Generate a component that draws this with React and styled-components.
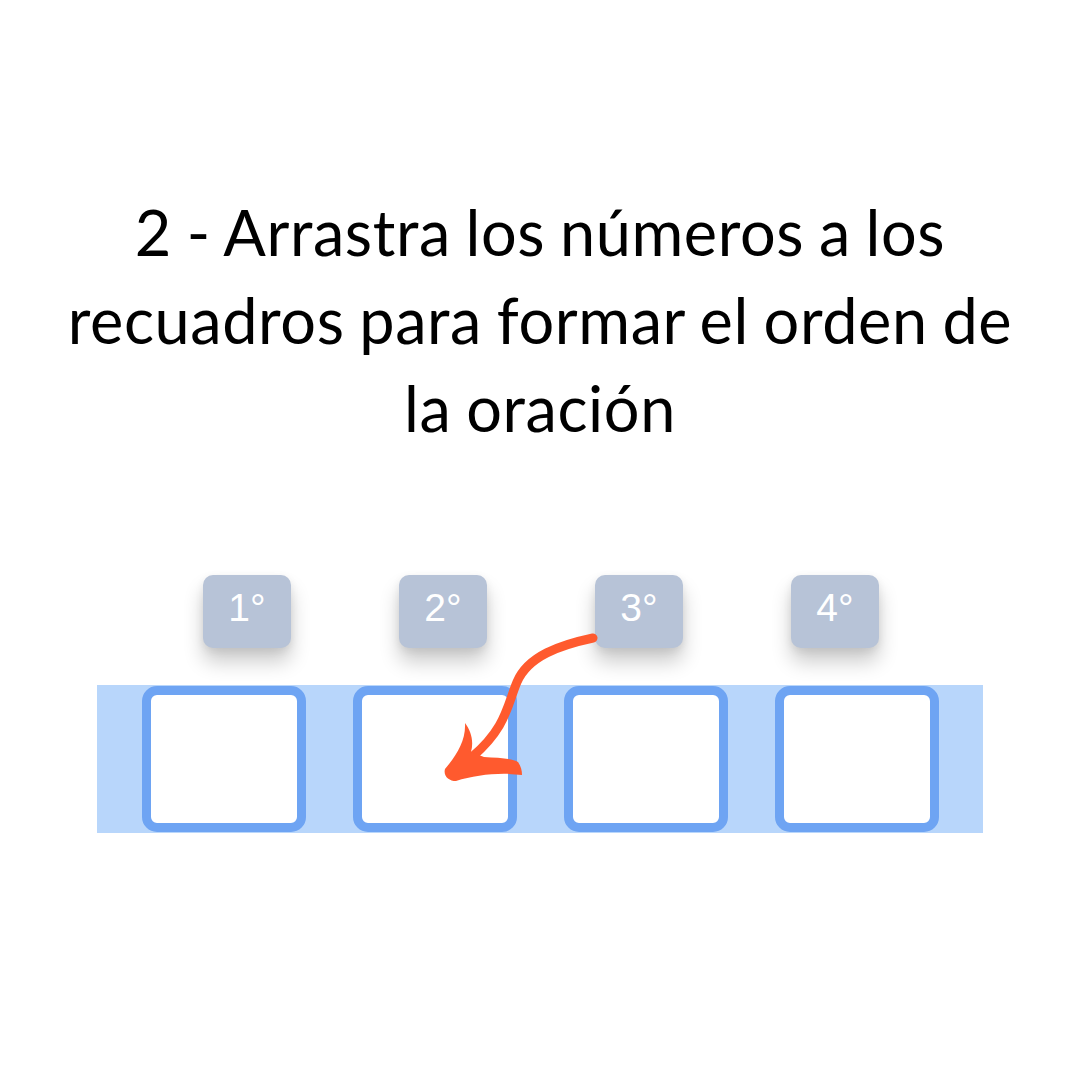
import React from "react";
import styled, { createGlobalStyle } from "styled-components";

const Global = createGlobalStyle`
  html, body { margin: 0; padding: 0; background: #ffffff; }
  #root { width: 1080px; height: 1080px; }
`;

const Page = styled.div`
  position: relative;
  width: 1080px;
  height: 1080px;
  background: #ffffff;
  display: flex;
  flex-direction: column;
  align-items: center;
  overflow: hidden;
`;

const Title = styled.h1`
  margin: 188px 0 0;
  font-family: "Lato", "Open Sans", sans-serif;
  font-weight: 400;
  font-size: 63px;
  line-height: 88px;
  letter-spacing: 0.6px;
  word-spacing: -2px;
  color: #000000;
  text-align: center;
  white-space: nowrap;
`;

const ChipRow = styled.div`
  margin-top: 123px;
  display: flex;
  gap: 108px;
  padding-left: 2px;
`;

const Chip = styled.div`
  width: 88px;
  height: 73px;
  box-sizing: border-box;
  padding-top: 13px;
  border-radius: 10px;
  background: #b7c3d7;
  box-shadow: 0 14px 20px rgba(0, 0, 0, 0.2), 0 3px 8px rgba(0, 0, 0, 0.08);
  color: #ffffff;
  font-family: "Liberation Sans", Arial, sans-serif;
  font-size: 39px;
  line-height: 40px;
  text-align: center;
`;

const Band = styled.div`
  margin-top: 37px;
  width: 886px;
  height: 148px;
  background: #b8d6fb;
  display: flex;
  align-items: center;
  justify-content: center;
  gap: 47px;
`;

const Slot = styled.div`
  width: 164px;
  height: 146px;
  box-sizing: border-box;
  border: 9px solid #6ea4f3;
  border-radius: 15px;
  background: #ffffff;
`;

const ArrowLayer = styled.svg`
  position: absolute;
  left: 0;
  top: 0;
  width: 1080px;
  height: 1080px;
  pointer-events: none;
`;

const orders = ["1°", "2°", "3°", "4°"];

export default function App() {
  return (
    <>
      <Global />
      <Page>
        <Title>
          2 - Arrastra los números a los
          <br />
          recuadros para formar el orden de
          <br />
          la oración
        </Title>
        <ChipRow>
          {orders.map((o) => (
            <Chip key={o}>{o}</Chip>
          ))}
        </ChipRow>
        <Band>
          {orders.map((o) => (
            <Slot key={o} />
          ))}
        </Band>
        <ArrowLayer viewBox="0 0 1080 1080">
          <path
            d="M 593 638 C 560 645, 528 656, 517 682 C 507 706, 506 728, 472 757"
            fill="none"
            stroke="#ff5a2e"
            strokeWidth="9"
            strokeLinecap="round"
          />
          <path
            d="M 445 769 C 456 756, 466 741, 465 723 C 471 731, 474 741, 471 752 L 484 757 C 498 758, 512 758, 518 762 C 521 766, 522 771, 522 775 C 500 772, 476 775, 456 781 C 449 781, 443 776, 445 769 Z"
            fill="#ff5a2e"
          />
        </ArrowLayer>
      </Page>
    </>
  );
}
